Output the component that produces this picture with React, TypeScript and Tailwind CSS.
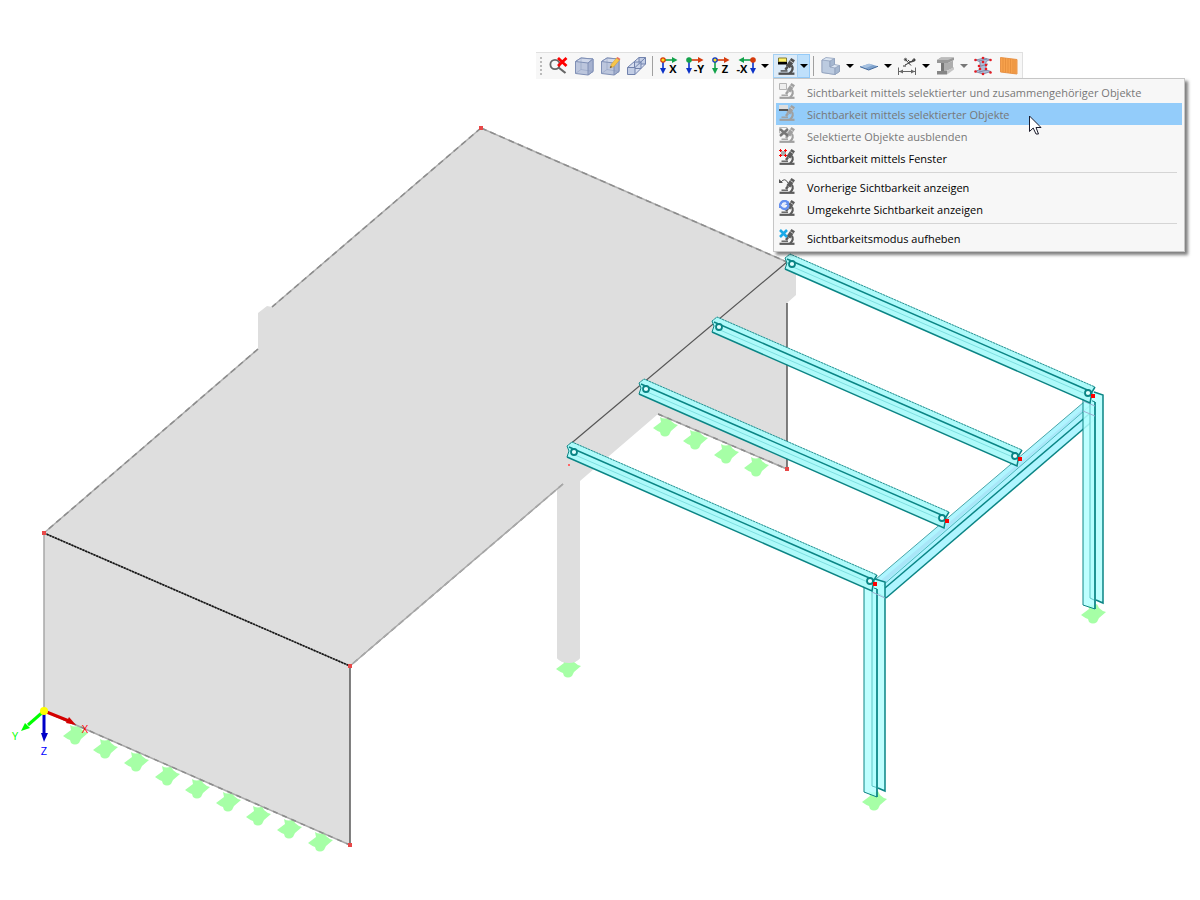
import { useState, type ReactNode } from "react";
import clsx from "clsx";

type Point = [number, number];

const purlins: Point[] = [
  [785, 258],
  [712, 321],
  [639, 383],
  [567, 446],
];

const supports: Point[] = [
  [665, 426],
  [695, 439],
  [726, 453],
  [756, 466],
  [75, 734],
  [105, 748],
  [136, 761],
  [167, 775],
  [197, 788],
  [228, 801],
  [258, 815],
  [289, 828],
  [320, 841],
  [568, 667],
  [874, 800],
  [1093, 613],
];

const nodes: Point[] = [
  [481, 128],
  [44, 533],
  [350, 666],
  [350, 845],
  [787, 469],
];

function Support({ at }: { at: Point }) {
  return (
    <path
      transform={`translate(${at[0]} ${at[1]})`}
      d="M-12 2L-4-4L-5-9Q0-6 4-9L6-5Q9-2 13-1L6 5L4 9Q0 12-4 9L-5 6Q-8 5-12 2Z"
      fill="#a6ffa6"
    />
  );
}

function Purlin({ at }: { at: Point }) {
  return (
    <g transform={`translate(${at[0]} ${at[1]})`} stroke="#0a8585" fill="none">
      <path d="M0 0L5-4L310 129L307 134V145L300 142L0 11L2 6Z" fill="#aefafa" stroke="none" />
      <path d="M8 9L303 137" stroke="#7fdfe0" />
      <path d="M0 0L5-4L310 129" strokeOpacity="0.35" />
      <path d="M0 0L5-4L310 129" strokeDasharray="2 1" strokeOpacity="0.8" />
      <path d="M2 1L307 134" strokeWidth="1.5" />
      <path d="M0 11L305 145L307 134L310 129" strokeWidth="1.5" />
      <path d="M0 0L2 5L0 11" />
      <circle cx="7" cy="6" r="3" fill="#e2ffff" strokeWidth="1.8" />
      <circle cx="303" cy="135" r="3" fill="#e2ffff" strokeWidth="1.8" />
      <rect x="306" y="136" width="4" height="4" fill="#f00" stroke="none" />
    </g>
  );
}

function Rafter() {
  return (
    <g fill="none" stroke="#0a8585">
      <path d="M876 579L1084 402L1095 402V419L886 598L876 592Z" fill="#aff5ff" stroke="none" />
      <path d="M880 581L1084 408L1090 405L884 583Z" fill="#a9e6f8" stroke="none" />
      <path d="M876 579L1084 402" stroke="#4aa5a8" />
      <path d="M882 586L1092 404" stroke="#4fb5bb" />
      <path d="M885 588L1095 409" strokeWidth="1.5" />
      <path d="M886 598L1095 419" strokeWidth="1.5" />
      <path d="M876 592L886 598" />
    </g>
  );
}

function SteelColumns() {
  return (
    <g fill="#b3ffff" fillOpacity="0.85" stroke="#0a8585">
      <path d="M1090 390L1103 395V603L1090 598Z" stroke="none" />
      <path d="M1094 392L1103 395V603L1096 600" fill="none" strokeWidth="1.5" />
      <path d="M1083 397L1095 402V609L1083 605Z" />
      <path d="M1090 402V598L1096 601" fill="none" stroke="#5fc5c5" />
      <path d="M1095 402V609" strokeWidth="1.5" />
      <path d="M1083 401L1095 406M1083 411L1095 416" fill="none" stroke="#9aaed0" />
      <path d="M872 578L885 582V791L872 786Z" stroke="none" />
      <path d="M875 579L885 582V791L878 788" fill="none" strokeWidth="1.5" />
      <path d="M864 585L877 589V797L864 792Z" />
      <path d="M872 588V786L878 788" fill="none" stroke="#5fc5c5" />
      <path d="M877 589V797" strokeWidth="1.5" />
      <path d="M872 592L885 598" fill="none" stroke="#9aaed0" />
    </g>
  );
}

function Axes() {
  return (
    <g fontFamily="'Open Sans', sans-serif" fontSize="11" textAnchor="middle">
      <path d="M44 711L69 721" stroke="#d40000" strokeWidth="3" />
      <path d="M76 725L66 723L69 717Z" fill="#d40000" />
      <path d="M44 711L28 725" stroke="#0f0" strokeWidth="3" />
      <path d="M21 731L25 723L30 728Z" fill="#0f0" />
      <path d="M44 711V735" stroke="#0000c8" strokeWidth="3" />
      <path d="M44 742L41 733H48Z" fill="#0000c8" />
      <circle cx="44" cy="711" r="4" fill="#ff0" />
      <text x="85" y="733" fill="#f00">X</text>
      <text x="15" y="740" fill="#0f0">Y</text>
      <text x="44" y="755" fill="#00f">Z</text>
    </g>
  );
}

function StructureModel() {
  return (
    <svg
      viewBox="0 0 1200 900"
      className="col-start-1 row-start-1 block h-auto w-full"
      role="img"
      aria-label="Strukturmodell"
    >
      <path
        d="M481 128L787 262L796 268V295L787 303V470L658 414L580 481V658Q576 663 569 663Q561 663 557 658V489L350 666V845L44 711V533L258 349V313L267 306L272 307Z"
        fill="#dedede"
      />
      {supports.map((p) => (
        <Support key={p.join()} at={p} />
      ))}
      <path d="M557 650H580V658Q576 663 569 663Q561 663 557 658Z" fill="#dedede" />
      <g fill="none" stroke="#8c8c8c" strokeWidth="1.5">
        <path d="M481 128L787 262M481 128L272 307M258 349L44 533" stroke="#b0b0b0" />
        <path d="M481 128L787 262M481 128L272 307M258 349L44 533M563 484L350 666" strokeDasharray="6 4" />
        <path d="M563 484L350 666M44 533V711M44 711L350 845M658 414L787 469" stroke="#a8a8a8" />
        <path d="M44 711L350 845M658 414L787 469" strokeDasharray="5 5" />
        <path d="M350 666V845M787 303V469" stroke="#585858" />
        <path d="M787 262L568 446" stroke="#555" strokeWidth="1.2" />
        <path d="M44 533L350 666" stroke="#777" />
        <path d="M44 533L350 666" stroke="#111" strokeDasharray="2 1" />
      </g>
      {nodes.map(([x, y]) => (
        <rect key={`${x}-${y}`} x={x - 2} y={y - 2} width="4" height="4" fill="#e84848" />
      ))}
      <rect x="568" y="464" width="2" height="2" fill="#f66" />
      <Rafter />
      <SteelColumns />
      {purlins.map((p) => (
        <Purlin key={p.join()} at={p} />
      ))}
      <Axes />
    </svg>
  );
}

function Icon({ children }: { children: ReactNode }) {
  return (
    <svg viewBox="0 0 24 24" className="size-6 shrink-0" fill="none" aria-hidden="true">
      {children}
    </svg>
  );
}

function CubeShape() {
  return (
    <g stroke="#8090b6" strokeLinejoin="round">
      <path d="M2.5 7.5L8 4L20 5V17.5L15 21L2.5 19.5Z" fill="#bcc6dd" />
      <path d="M2.5 7.5L8 4L20 5L15 9Z" fill="#d0d8ea" />
      <path d="M15 9L20 5V17.5L15 21Z" fill="#a5b1cf" />
      <path d="M8 4V15.5L2.5 19.5M8 15.5L20 17.5" strokeOpacity="0.4" />
    </g>
  );
}

const GREEN = "#12a24a";
const RED = "#d63a0c";
const BLUE = "#0b32c8";

interface AxisIconProps {
  label: string;
  horizontal: string;
  vertical: string;
  dot: string;
  ring: string;
  flipped?: boolean;
}

function AxisIcon({ label, horizontal, vertical, dot, ring, flipped = false }: AxisIconProps) {
  const x = flipped ? 19 : 7;
  return (
    <Icon>
      <path d={flipped ? "M19 6H9" : "M7 6H17"} stroke={horizontal} strokeWidth="1.6" />
      <path d={flipped ? "M4.5 6L10 3V9Z" : "M21.5 6L16 3V9Z"} fill={horizontal} />
      <path d={`M${x} 6V15`} stroke={vertical} strokeWidth="1.6" />
      <path d={`M${x} 20L${x - 3} 14H${x + 3}Z`} fill={vertical} />
      <circle cx={x} cy="6" r="2.2" fill={dot} stroke={ring} strokeWidth="1.2" />
      <text
        x={flipped ? 8 : 17}
        y="19"
        textAnchor="middle"
        fontFamily="'Open Sans', sans-serif"
        fontSize="11"
        fontWeight="700"
        fill="#000"
      >
        {label}
      </text>
    </Icon>
  );
}

function Microscope({ color }: { color: string }) {
  return (
    <g stroke={color}>
      <path d="M12.5 0L16 2.2L11.3 9.6L7.4 7.2Z" fill={color} stroke="none" />
      <path d="M9 8.2L7 11" strokeWidth="2.4" />
      <path d="M12.8 7C14.6 9 14 12 11 14.5" strokeWidth="2.2" />
      <path d="M2.5 12.2H9" strokeWidth="1.4" />
      <path d="M.5 14.8H15.5" strokeWidth="2.2" />
      <path d="M11.4 2.6L14.4 4.6" stroke="#e4e4e4" strokeWidth=".8" />
    </g>
  );
}

function ToolButton({ label, children }: { label: string; children: ReactNode }) {
  return (
    <button
      type="button"
      aria-label={label}
      className="flex h-6 w-[26px] items-center justify-center hover:bg-[#dceefb]"
    >
      {children}
    </button>
  );
}

function Caret({ label, muted = false }: { label: string; muted?: boolean }) {
  return (
    <button
      type="button"
      aria-label={label}
      className={clsx("flex h-6 w-3 items-center justify-center", muted ? "text-[#777]" : "text-black")}
    >
      <svg viewBox="0 0 8 4" className="h-1 w-2" aria-hidden="true">
        <path d="M0 0H8L4 4Z" fill="currentColor" />
      </svg>
    </button>
  );
}

interface MenuEntry {
  label: string;
  disabled?: boolean;
  active?: boolean;
  overlay: ReactNode;
}

const menuGroups: MenuEntry[][] = [
  [
    {
      label: "Sichtbarkeit mittels selektierter und zusammengehöriger Objekte",
      disabled: true,
      overlay: <path d="M.5 .5H7.5V6.5H.5ZM8 6L10 9" fill="#eee" stroke="#b4b4b4" />,
    },
    {
      label: "Sichtbarkeit mittels selektierter Objekte",
      disabled: true,
      active: true,
      overlay: (
        <>
          <path d="M0 0H9V4H0Z" fill="#dedede" />
          <path d="M0 4H9V6H0Z" fill="#555" />
        </>
      ),
    },
    {
      label: "Selektierte Objekte ausblenden",
      disabled: true,
      overlay: (
        <>
          <path d="M.5 .5H8V6H.5Z" stroke="#bbb" />
          <path d="M1 2L9 9M9 2L1 9" stroke="#777" strokeWidth="2.4" />
        </>
      ),
    },
    {
      label: "Sichtbarkeit mittels Fenster",
      overlay: (
        <>
          <path d="M2 2H7V7H2Z" fill="#aaa" />
          <path d="M0 1.5H8M0 6.5H8M1.5 0V8M6.5 0V8" stroke="#f00" strokeDasharray="3 2" />
        </>
      ),
    },
  ],
  [
    {
      label: "Vorherige Sichtbarkeit anzeigen",
      overlay: (
        <>
          <path d="M2 4Q6-1 9 5" stroke="#555" />
          <path d="M0 1V5H4Z" fill="#555" />
        </>
      ),
    },
    {
      label: "Umgekehrte Sichtbarkeit anzeigen",
      overlay: (
        <>
          <circle cx="5.5" cy="5" r="4" stroke="#6590ee" strokeWidth="2.5" strokeDasharray="10 2.5" />
          <path d="M3 7L7 3" stroke="#dfe8ff" strokeWidth="2" />
          <path d="M0 3V8H4ZM10 1V5H6Z" fill="#6590ee" />
        </>
      ),
    },
  ],
  [
    {
      label: "Sichtbarkeitsmodus aufheben",
      overlay: <path d="M1 1L8 8M8 1L1 8" stroke="#1aaae8" strokeWidth="2.6" />,
    },
  ],
];

function VisibilityMenu() {
  return (
    <div
      role="menu"
      className="absolute top-full left-0 z-10 w-[412px] border border-[#c6c6c6] bg-[#f7f7f7] p-0.5 shadow-[3px_3px_3px_rgba(0,0,0,0.5)]"
    >
      {menuGroups.map((group, i) => (
        <div key={group[0].label} role="group">
          {i > 0 && (
            <div role="separator" className="mr-[5px] ml-1 flex h-[7px] items-center">
              <div className="h-px w-full bg-[#d5d5d5]" />
            </div>
          )}
          {group.map((entry) => (
            <button
              key={entry.label}
              type="button"
              role="menuitem"
              disabled={entry.disabled}
              className={clsx(
                "flex h-[22px] w-full items-center gap-3 pl-[3px] text-left text-[11px] whitespace-nowrap",
                entry.disabled ? "text-[#777]" : "text-black",
                entry.active && "bg-[#93ccfa]"
              )}
            >
              <svg viewBox="0 0 16 16" className="mb-0.5 size-4 shrink-0" fill="none" aria-hidden="true">
                <Microscope color={entry.disabled ? "#a0a0a0" : "#5c5c5c"} />
                {entry.overlay}
              </svg>
              <span className="pt-0.5 leading-4">{entry.label}</span>
            </button>
          ))}
        </div>
      ))}
      <svg viewBox="0 0 13 20" className="absolute top-9 left-[255px] h-5 w-[13px]" aria-hidden="true">
        <path
          d="M.5 1V16.5L4.2 13L7 19H9.5L7 12.5H12Z"
          fill="#fff"
          stroke="#1b1b2b"
          strokeLinejoin="round"
        />
      </svg>
    </div>
  );
}

function Divider() {
  return <div className="mx-0.5 h-5 w-px bg-[#a0a0a0]" />;
}

function Toolbar() {
  const [open, setOpen] = useState(true);

  return (
    <div
      role="toolbar"
      className="flex h-[27px] items-center border-t border-r border-[#e0e0e0] bg-[#f7f7f7]"
    >
      <div className="mx-1 h-[18px] border-l-2 border-dotted border-[#bbb]" />
      <ToolButton label="Auswahl aufheben">
        <Icon>
          <circle cx="8" cy="10.5" r="4.6" stroke="#666" strokeWidth="1.8" />
          <path d="M11.5 13.5L18.5 19" stroke="#666" strokeWidth="2.2" />
          <path d="M11 4L19.5 12M19.5 4L11 12" stroke="#f00" strokeWidth="2.8" />
        </Icon>
      </ToolButton>
      <ToolButton label="Isometrische Ansicht">
        <Icon>
          <CubeShape />
        </Icon>
      </ToolButton>
      <ToolButton label="Ansicht bearbeiten">
        <Icon>
          <CubeShape />
          <path d="M11 14L12.5 10L17.5 4L20.5 6L15 12.5Z" fill="#f7c64a" stroke="#d9982c" strokeWidth=".5" />
          <path d="M17.5 4L18.5 3L21.5 5L20.5 6Z" fill="#ed6b5b" />
          <path d="M11 14L11.8 12L13 13Z" fill="#333" />
        </Icon>
      </ToolButton>
      <ToolButton label="Perspektive">
        <Icon>
          <g stroke="#7182ad" fill="#c2cde5">
            <path d="M2.5 13L14 3.5H20.5V10L10 20.5Z" fill="#d8dff0" stroke="none" />
            <path d="M14 3.5H20.5V10H14Z" />
            <path d="M9.5 8H16V14.5H9.5Z" fillOpacity="0.7" />
            <path d="M2.5 13.5H10V20.5H2.5Z" />
            <path d="M2.5 13.5L14 3.5M10 13.5L20.5 3.5M10 20.5L20.5 10" />
          </g>
        </Icon>
      </ToolButton>
      <Divider />
      <ToolButton label="Ansicht in X">
        <AxisIcon label="X" horizontal={GREEN} vertical={BLUE} dot="#ffe11a" ring={RED} />
      </ToolButton>
      <ToolButton label="Ansicht gegen Y">
        <AxisIcon label="-Y" horizontal={RED} vertical={BLUE} dot={GREEN} ring={GREEN} />
      </ToolButton>
      <ToolButton label="Ansicht in Z">
        <AxisIcon label="Z" horizontal={RED} vertical={GREEN} dot="#ffe11a" ring={BLUE} />
      </ToolButton>
      <ToolButton label="Ansicht gegen X">
        <AxisIcon label="-X" horizontal={GREEN} vertical={BLUE} dot={RED} ring={RED} flipped />
      </ToolButton>
      <Caret label="Weitere Ansichten" />

      <div className="relative ml-0.5 flex h-6">
        <button
          type="button"
          aria-label="Sichtbarkeit"
          className="flex h-6 w-[25px] items-center justify-center border border-[#a4d0f3] bg-[#dcebf8]"
        >
          <svg viewBox="0 0 18 18" className="size-[18px]" fill="none" aria-hidden="true">
            <g transform="translate(1 1) scale(1.06)">
              <Microscope color="#505050" />
            </g>
            <path d="M1.5 1H9.5V5H1.5Z" fill="#fff36a" stroke="#857c32" />
            <path d="M1 5H10V7.5H1Z" fill="#000" />
          </svg>
        </button>
        <button
          type="button"
          aria-label="Sichtbarkeitsmenü"
          aria-expanded={open}
          onClick={() => setOpen(!open)}
          className="flex h-6 w-3 items-center justify-center border border-l-0 border-[#94caf8] bg-[#bfe0fb]"
        >
          <svg viewBox="0 0 8 4" className="h-1 w-2 shrink-0" aria-hidden="true">
            <path d="M0 0H8L4 4Z" fill="#000" />
          </svg>
        </button>
        {open && <VisibilityMenu />}
      </div>

      <div className="mr-1 ml-[3px] h-5 w-px bg-[#a0a0a0]" />
      <ToolButton label="Volumenkörper">
        <Icon>
          <g stroke="#8fa0bb" strokeWidth=".8" strokeLinejoin="round">
            <path d="M3 6L7 3.5L15.5 4.5V10.5L20.5 11.5V17.5L16 20.5L3 18.5Z" fill="#dbe5f2" />
            <path d="M3 6L11 7V13L16 14V20.5L3 18.5Z" fill="#bccbe0" />
            <path d="M11 7L15.5 4.5V10.5L11 13Z" fill="#a5b7d0" />
            <path d="M16 14L20.5 11.5V17.5L16 20.5Z" fill="#a5b7d0" />
          </g>
        </Icon>
      </ToolButton>
      <Caret label="Körperdarstellung" />
      <ToolButton label="Flächen">
        <Icon>
          <path d="M3 12.7L12 9.7L21 12.3L11.7 16Z" fill="#7ea2cd" />
          <path d="M3 12.7L12 9.7L16 11L8 14.5Z" fill="#a6c1e0" />
          <path d="M3 12.7L11.7 16L21 12.3" stroke="#44699b" />
        </Icon>
      </ToolButton>
      <Caret label="Flächendarstellung" />
      <ToolButton label="Bemaßung">
        <Icon>
          <path d="M3.5 13.5V21M20.5 13.5V21M4 17.5H20" stroke="#666" />
          <path d="M4 17.5L8 15.5V19.5ZM20 17.5L16 15.5V19.5Z" fill="#666" />
          <path d="M10 5L16 11.5M10 11L14 9L20 5M13 6Q16 10 20 6M8 12H11" stroke="#333" />
          <circle cx="10.5" cy="5.5" r="1.2" stroke="#333" strokeWidth=".8" />
          <circle cx="19" cy="6" r="1.2" stroke="#333" strokeWidth=".8" />
        </Icon>
      </ToolButton>
      <Caret label="Bemaßungsarten" />
      <ToolButton label="Querschnitt">
        <Icon>
          <path d="M4 6L8 3.5H21V6L15 9H4Z" fill="#989898" />
          <path d="M4 6L8 3.5H21L15 6Z" fill="#bcbcbc" />
          <path d="M9 9H15L20 6.5V14L11 18H8Z" fill="#adadad" />
          <path d="M8 9H11V17H8Z" fill="#777" />
          <path d="M4 17H14V20.5H4Z" fill="#858585" />
          <path d="M14 17L21 13V15.5L14 20.5Z" fill="#c6c6c6" />
        </Icon>
      </ToolButton>
      <Caret label="Querschnittsdarstellung" muted />
      <ToolButton label="FE-Netz">
        <Icon>
          <path d="M5 6L13 4L19 5.5L15 7.5V16L20 17.5L12 20L4 17.5L9 15.5V8Z" fill="#aebbd5" stroke="#7380a0" strokeWidth=".8" />
          <path d="M8 7L16 5M10 12L17 10M8 18L16 16" stroke="#7e8aa8" />
          <g fill="#e51b23">
            {[
              [4.5, 6], [12, 4], [19.5, 6], [12, 8],
              [8, 12], [15, 11],
              [4.5, 17.5], [12, 20], [9, 15], [15, 15], [19.5, 18.5],
            ].map(([x, y]) => (
              <circle key={`${x}-${y}`} cx={x} cy={y} r="1.3" />
            ))}
          </g>
        </Icon>
      </ToolButton>
      <ToolButton label="Holzflächen">
        <Icon>
          <path d="M3.5 3.5L20 5.5V20L3.5 18Z" fill="#f7a14c" stroke="#e9954a" />
          <path d="M6 4V18M8.5 4V18.5M11 4.5V19M13.5 5V19M16 5V19.5M18 5.5V20" stroke="#dd8636" strokeWidth=".6" />
        </Icon>
      </ToolButton>
    </div>
  );
}

export default function App() {
  return (
    <main className="grid min-h-screen grid-cols-1 items-start overflow-hidden bg-white font-['Open_Sans','Noto_Sans',sans-serif]">
      <StructureModel />
      <div className="z-10 col-start-1 row-start-1 flex justify-end pt-[52px] pr-[177px]">
        <Toolbar />
      </div>
    </main>
  );
}
